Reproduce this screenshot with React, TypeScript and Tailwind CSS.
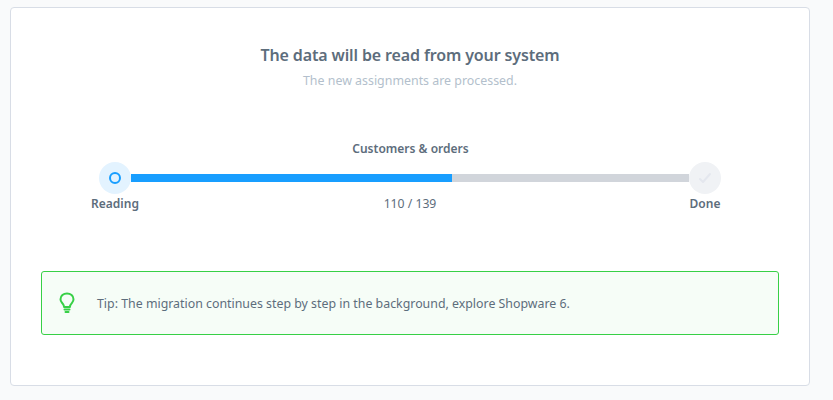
export default function App() {
  return (
    <div className="w-[833px] h-[400px] overflow-hidden bg-[#f9fafb] pt-[7px] pl-[10px] font-['Noto_Sans',sans-serif]">
      <div className="w-[800px] h-[379px] rounded-[4px] border border-[#d8dde6] bg-white px-[30px] pt-[36px]">
        <h1 className="text-center text-[16px] leading-[22px] font-semibold text-[#5d6d7c] tracking-[-0.13px]">
          The data will be read from your system
        </h1>
        <p className="mt-[5px] text-center text-[12.4px] leading-[20px] text-[#b3bfcc]">
          The new assignments are processed.
        </p>

        <div className="mt-[50px] px-[48px]">
          <div className="text-center text-[12px] leading-[16px] font-semibold text-[#5d6d7c] ml-[1px]">
            Customers &amp; orders
          </div>
          <div className="mt-[5px] flex items-center px-[10px]">
            <div className="flex h-8 w-8 shrink-0 items-center justify-center rounded-full bg-[#e3f3ff]">
              <div className="h-3 w-3 rounded-full border-2 border-[#189eff]" />
            </div>
            <div className="h-2 flex-1 bg-[#d1d5db]">
              <div className="h-full w-[57.5%] bg-[#189eff]" />
            </div>
            <div className="flex h-8 w-8 shrink-0 items-center justify-center rounded-full bg-[#f0f2f5]">
              <svg
                width="14"
                height="12"
                viewBox="0 0 14 12"
                fill="none"
                stroke="#e4e7ee"
                strokeWidth="2"
                strokeLinecap="round"
                strokeLinejoin="round"
              >
                <path d="M2 7l3 3 7-8" />
              </svg>
            </div>
          </div>
          <div className="mt-[1px] flex items-center justify-between px-[1px] text-[12px] leading-[18px] text-[#5d6d7c]">
            <span className="w-[50px] text-center font-semibold">Reading</span>
            <span className="text-[12.2px]">110 / 139</span>
            <span className="w-[50px] text-center font-semibold">Done</span>
          </div>
        </div>

        <div className="mt-[58px] flex h-[64px] items-center rounded-[3px] border border-[#37d046] bg-[#f6fdf7] pl-[16px]">
          <svg
            width="18"
            height="22"
            viewBox="0 0 18 22"
            fill="none"
            stroke="#37d046"
            strokeWidth="2"
            strokeLinecap="round"
            strokeLinejoin="round"
            className="shrink-0"
          >
            <path d="M6.2 15c-.3-2-1-2.900-2.200-4.200C3 9.700 2.500 8.500 2.500 7.200 2.500 3.900 5.400 1.500 9 1.500s6.500 2.400 6.500 5.700c0 1.300-.5 2.500-1.500 3.600-1.200 1.300-1.900 2.200-2.200 4.200z" />
            <path d="M6.500 17.500h5M7.500 20h3" />
          </svg>
          <span className="ml-[21px] mt-[1px] text-[12.37px] leading-[20px] text-[#5d6d7c]">
            Tip: The migration continues step by step in the background, explore Shopware 6.
          </span>
        </div>
      </div>
    </div>
  );
}
